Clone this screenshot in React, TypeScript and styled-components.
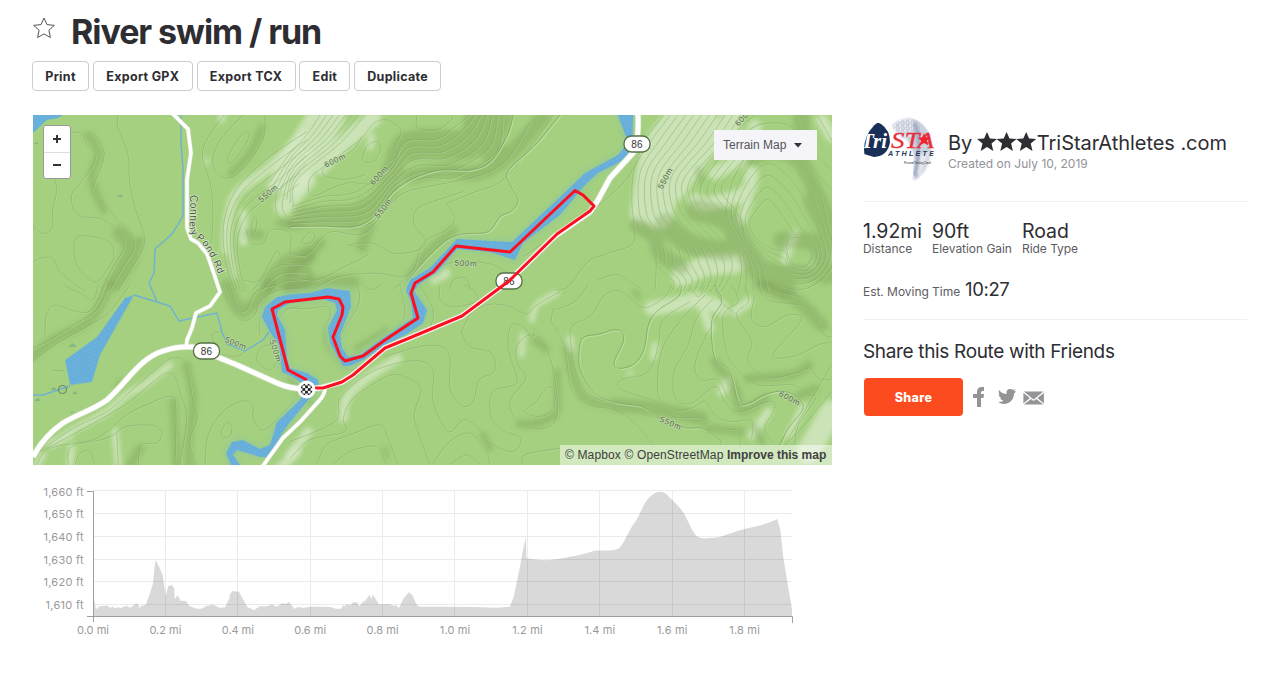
import React from 'react';
import styled, { createGlobalStyle } from 'styled-components';

const Global = createGlobalStyle`
  * { box-sizing: border-box; }
  body { margin: 0; background: #fff; color: #2d2d32; font-family: Inter, "Liberation Sans", sans-serif; }
`;

const Page = styled.main`
  padding: 11px 21px 0 32px;
  height: 688px;
  overflow: hidden;
`;
const TitleRow = styled.header`
  display: flex;
  align-items: center;
  height: 40px;
  gap: 15px;
  svg { margin-top: -7px; }
`;
const Title = styled.h1`
  margin: 0;
  padding-top: 1px;
  font-size: 34px;
  line-height: 40px;
  font-weight: 700;
  letter-spacing: -1.06px;
  white-space: nowrap;
`;
const Actions = styled.nav`
  display: flex;
  gap: 3.8px;
  margin-top: 10px;
`;
const ActionButton = styled.button<{ $w: number }>`
  width: ${(p) => p.$w}px;
  height: 30px;
  padding: 0;
  border: 1px solid #ccccd0;
  border-radius: 4px;
  background: #fff;
  color: #2d2d32;
  font: 700 12.5px/29px Inter, sans-serif;
  letter-spacing: 0.3px;
  white-space: nowrap;
`;
const Columns = styled.div`
  display: flex;
  gap: 31px;
  padding-left: 1px;
  margin-top: 24px;
`;
const Left = styled.section`
  width: 799px;
  flex: none;
`;
const MapFrame = styled.div`
  position: relative;
  height: 350px;
  overflow: hidden;
  > svg { display: block; }
`;
const ZoomControl = styled.div`
  position: absolute;
  left: 10px;
  top: 10px;
  width: 28px;
  height: 54px;
  border: 1px solid #999;
  border-radius: 3px;
  background: #fff;
`;
const ZoomKey = styled.button`
  display: grid;
  place-items: center;
  width: 26px;
  height: 26px;
  padding: 0;
  border: 0;
  background: none;
  & + & { border-top: 1px solid #ddd; height: 25px; padding-bottom: 1px; }
`;
const MapType = styled.button`
  position: absolute;
  left: 681px;
  top: 15px;
  width: 103px;
  height: 30px;
  display: flex;
  align-items: center;
  gap: 8px;
  padding: 0 9px;
  border: 0;
  background: #f4f4f9;
  color: #55555a;
  font: 12px "Liberation Sans", sans-serif;
  white-space: nowrap;
`;
const Attribution = styled.div`
  position: absolute;
  right: 0;
  bottom: 0;
  width: 272px;
  height: 20px;
  padding-left: 5px;
  background: rgba(255, 255, 255, 0.5);
  color: #404040;
  font: 12px/20px "Liberation Sans", sans-serif;
  letter-spacing: 0.14px;
  white-space: nowrap;
  b { letter-spacing: 0; }
`;
const ChartWrap = styled.div`
  margin-top: 15px;
  svg { display: block; }
`;
const Side = styled.aside`
  width: 384px;
  flex: none;
`;
const Author = styled.div`
  display: flex;
  height: 87px;
  gap: 14px;
  padding-left: 1px;
  border-bottom: 1px solid #f0f0f5;
`;
const AuthorText = styled.div`
  padding-top: 15px;
`;
const Name = styled.div`
  font-size: 20px;
  line-height: 26px;
  letter-spacing: -0.05px;
  white-space: nowrap;
  svg { vertical-align: -2px; margin-left: -1px; }
`;
const Created = styled.div`
  font-size: 12px;
  line-height: 15px;
  color: #929297;
  letter-spacing: 0.02px;
`;
const Stats = styled.div`
  display: flex;
  padding-top: 17px;
  height: 75px;
`;
const Stat = styled.div<{ $w: number }>`
  width: ${(p) => p.$w}px;
  white-space: nowrap;
`;
const Value = styled.div`
  font-size: 19.5px;
  line-height: 24px;
  letter-spacing: -0.03px;
`;
const Label = styled.div`
  font-size: 12px;
  line-height: 12px;
  color: #5c5c61;
  letter-spacing: -0.04px;
`;
const Moving = styled.div`
  display: flex;
  align-items: baseline;
  gap: 5px;
  height: 43px;
  border-bottom: 1px solid #f0f0f0;
`;
const Time = styled.span`
  font-size: 18.5px;
  line-height: 24px;
  letter-spacing: -0.4px;
`;
const ShareTitle = styled.h2`
  margin: 19px 0 14px;
  font-size: 19px;
  line-height: 25px;
  font-weight: 400;
  letter-spacing: -0.34px;
`;
const ShareRow = styled.div`
  display: flex;
  align-items: center;
  padding-left: 1px;
`;
const ShareButton = styled.button`
  width: 99px;
  height: 38px;
  border: 0;
  border-radius: 4px;
  background: #fc4c1f;
  color: #fff;
  font: 800 12.5px Inter, sans-serif;
  letter-spacing: 0.3px;
  margin-right: 10px;
`;

type Pt = [number, number];

/* Catmull-Rom spline through a list of points. */
function curve(p: Pt[], closed = false): string {
  const n = p.length;
  const at = (i: number): Pt => (closed ? p[(i + n) % n] : p[Math.max(0, Math.min(n - 1, i))]);
  let d = `M${p[0][0]} ${p[0][1]}`;
  for (let i = 0; i < (closed ? n : n - 1); i++) {
    const [a, b, c, e] = [at(i - 1), at(i), at(i + 1), at(i + 2)];
    d += `C${(b[0] + (c[0] - a[0]) / 6).toFixed(1)} ${(b[1] + (c[1] - a[1]) / 6).toFixed(1)} ${(c[0] - (e[0] - b[0]) / 6).toFixed(1)} ${(c[1] - (e[1] - b[1]) / 6).toFixed(1)} ${c[0].toFixed(1)} ${c[1].toFixed(1)}`;
  }
  return closed ? d + 'Z' : d;
}
function pts(s: string): Pt[] {
  return s.trim().split(/\s+/).map((q) => q.split(',').map(Number) as Pt);
}
/* Evenly spaced contours between two boundary contours. */
function band(a: string, b: string, n: number, closed = false): string[] {
  const A = pts(a);
  const B = pts(b);
  return Array.from({ length: n + 1 }, (_, k) =>
    curve(A.map((q, i) => [q[0] + ((B[i][0] - q[0]) * k) / n, q[1] + ((B[i][1] - q[1]) * k) / n] as Pt), closed));
}
const line = (s: string) => curve(pts(s));
const ring = (s: string) => curve(pts(s), true);

interface Sheet {
  x: number;
  y: number;
  lines: string[];
  bold?: string[];
  dark: [string, number][];
  light: [string, number][];
}

/* Terrain sheets, each drawn at three units to the pixel. */
const sheets: Sheet[] = [
  {
    x: 30, y: 110,
    lines: [
      line('265,15 262,45 275,80 296,140 299,210 315,290 342,370 340,415 305,475 265,540'),
      line('125,68 155,70 172,105 195,130 190,165 150,220 124,260 145,315 215,328 265,362 284,410 250,470 215,540'),
      line('195,72 222,120 215,170 190,230 192,258 235,292 260,330 303,368 312,415 280,470 240,540'),
      line('75,205 80,245 68,300 68,350 50,370 25,365 9,345'),
      ring('140,383 185,380 238,397 252,440 225,490 195,517 150,480 133,430'),
      line('9,455 40,443 70,447 90,485 125,515 165,545'),
      line('582,15 530,90 518,145 540,215 549,300 545,400'),
      line('640,15 575,85 549,145 560,190 600,204 650,165 700,85 705,15'),
      ring('595,140 620,95 648,66 656,85 630,130 600,162'),
      ...band('830,65 720,140 625,230 583,330 585,440 615,545', '830,160 740,245 655,310 623,390 632,490 650,545', 4),
      line('810,190 750,235 737,275 745,320 775,345 810,345'),
      line('810,220 765,255 758,300 785,330 810,325'),
      ring('665,345 672,322 680,330 679,355 670,368'),
      line('650,360 665,400 700,400 725,360 780,370 785,430 830,440'),
      line('640,510 690,510 740,425 760,455 810,460'),
      ...band('670,540 740,470 830,465', '720,545 760,515 830,510', 2),
    ],
    dark: [['175,75 205,130 185,205 220,300', 24], ['270,370 300,420 250,520', 44], ['330,390 310,455 260,530', 24], ['695,55 660,130 605,190', 24], ['655,370 690,375', 28], ['750,340 810,345', 24], ['720,520 770,465 830,440', 56], ['780,520 820,500', 66]],
    light: [['820,80 710,180 620,250 592,340 590,420', 28], ['640,310 640,395', 24], ['730,230 830,130', 40], ['760,290 830,210', 54], ['580,0 575,30', 20], ['530,150 530,158', 14], ['600,420 615,500', 14]],
  },
  {
    x: 290, y: 110,
    lines: [
      ...band('-60,215 0,130 50,75 90,15', '10,290 20,210 150,100 225,15', 7),
      line('55,245 60,205 100,170 170,120 215,85 250,40 290,30 330,55 330,80 315,110 322,135 290,160 270,180'),
      line('55,245 75,258 125,235 180,218 240,222 275,195 315,165 325,130 350,95 375,88'),
      line('215,80 190,120 130,155 98,180 110,200 170,208 225,195'),
      ...band('5,290 100,260 200,245 300,170 345,95 440,88 490,55 540,15', '0,350 100,350 240,340 310,245 400,205 500,200 620,125 640,15', 6),
      line('380,15 385,55 440,60 480,35 490,15'),
      ring('218,150 232,108 262,94 272,120 250,155'),
      ring('35,395 60,367 76,375 60,400'),
      line('0,430 50,435 95,385 130,365 220,372 280,310 340,250 440,225 560,200 650,150 720,40'),
      line('470,280 550,248 640,210 730,100 790,15'),
      line('470,280 495,325 470,360 400,400 370,480 310,540'),
      line('175,405 250,400 310,430 385,420 406,390 372,340 385,295 460,265 520,245'),
      line('0,500 80,510 155,475 235,430 175,405'),
      line('60,545 150,500 260,490 340,500 385,465'),
      line('480,540 490,510 530,505 540,540'),
      line('380,540 430,480 510,455 600,462 655,490'),
      line('810,370 760,400 700,440'),
    ],
    bold: [line('810,15 740,100 655,182 662,225 684,270 665,303 630,320 595,365 520,372 470,390 410,445 345,520'), line('0,350 90,348 190,350 250,320 310,245 370,205 450,180 540,180 600,155 650,80 670,15')],
    dark: [['350,110 420,100 540,100 570,15', 90], ['320,130 290,240 200,310 40,320', 60], ['360,200 470,180 550,190 640,150 760,20', 44], ['550,190 620,165 640,120', 28], ['0,340 100,330 200,345', 28], ['490,360 410,430 360,500', 26], ['240,345 215,410', 34], ['90,400 0,490', 34], ['0,530 120,515 190,515', 40], ['640,15 600,130', 56]],
    light: [['0,200 60,100 110,20', 110], ['-20,220 0,160 60,60', 60], ['90,170 160,100 250,25', 50], ['430,505 465,490', 32], ['0,200 90,110', 60], ['245,80 240,110', 20]],
  },
  {
    x: 555, y: 110,
    lines: [
      ...band('350,10 290,90 238,180 232,300 250,350 300,410 310,470 355,515 350,545', '560,10 500,100 405,210 410,280 450,340 500,390 530,450 525,500 500,545', 9),
      ...band('610,10 560,50 450,170 415,260 480,345 540,400 560,470 550,545', '640,130 580,140 530,190 500,245 555,320 575,400 620,470 640,545', 4),
      ...band('640,268 685,320 725,380 770,420 770,450 740,475 700,455 690,425 645,415 600,380 585,335 610,295', '640,90 730,140 790,240 820,350 840,440 800,510 730,540 665,520 610,455 550,385 515,290 560,160', 5, true),
      ring('697,395 730,383 760,400 770,440 745,470 705,450'),
      line('330,10 270,90 238,170 195,230 100,310 0,370'),
      line('235,330 235,400 160,430 100,455 40,530 0,540'),
      line('270,380 302,440 300,540'),
      line('130,510 190,495 260,540'),
      line('790,20 830,90'),
      line('725,15 760,110 830,180'),
      line('570,100 600,50 680,40 725,70 780,180 830,240'),
    ],
    dark: [['245,345 300,380 315,430 380,470', 44], ['330,340 400,400 480,420 520,420', 60], ['425,300 520,330 560,410 620,490 690,530', 66], ['590,145 650,125 730,150 790,260 820,330', 46], ['740,15 740,150', 50], ['680,390 780,400 810,480', 50], ['770,270 830,400', 50], ['430,180 435,210', 20], ['640,480 820,500', 45]],
    light: [['360,20 290,120 255,310', 60], ['440,20 350,150 310,310', 90], ['530,30 430,140 360,240', 66], ['600,50 560,140 480,190', 40], ['590,190 570,250 460,280 420,270', 42], ['580,270 560,330', 28], ['380,500 450,470 540,460', 60], ['720,370 690,450', 24], ['800,30 830,80', 35]],
  },
  {
    x: 30, y: 285,
    lines: [
      line('9,190 60,165 140,115 200,75 240,0'),
      line('9,230 75,180 180,120 240,80 300,0'),
      line('45,150 50,90 75,62 150,82 190,70 225,0'),
      line('100,0 160,30 190,45 205,0'),
      line('55,480 130,430 230,380 290,330 370,260 420,222 460,225 475,265 490,350 502,400 480,470 500,540'),
      line('9,510 60,485 200,410 300,350 390,275 430,268 450,320 470,400 450,540'),
      line('20,540 60,490 200,460 290,390 360,355 420,335 438,370 435,540'),
      line('115,540 125,485 230,460 290,425 370,422 396,445 380,475 335,480 325,540'),
      line('135,540 150,505 180,500 195,540'),
      line('260,440 265,540'),
      line('525,540 535,450 580,380 640,348 670,365 670,400 700,436 755,390 800,340'),
      ring('575,440 590,414 606,425 600,455 580,457'),
      ring('680,215 700,185 735,185 740,230 720,255 690,240'),
      line('560,190 547,150 570,142 610,170 650,190 620,215 560,205'),
      line('580,0 605,70 640,108 675,90 690,50 740,18 810,10'),
      line('600,0 625,70 650,75 680,20 740,0'),
      line('740,110 770,75 810,65'),
      line('690,150 690,110 705,75'),
    ],
    dark: [['240,0 180,105 70,165 0,220', 28], ['470,240 490,350 475,480 480,540', 25], ['430,350 440,540', 25], ['590,0 630,75 680,50 720,0', 38], ['330,490 300,540', 28], ['270,290 265,310', 18], ['640,90 690,40', 22]],
    light: [['60,480 130,435 230,380 290,330 350,295 420,240', 20], ['255,440 265,540', 20], ['125,485 120,540', 20], ['20,540 40,510', 18], ['800,500 740,560', 28], ['120,450 80,470', 22]],
  },
  {
    x: 290, y: 285,
    lines: [
      line('450,0 450,40 480,65 530,60 565,45 550,15 520,0'),
      line('515,140 545,85 600,58 660,65 710,87 740,60 810,20'),
      line('515,140 540,185 605,205 613,260 568,285 550,350 515,362 480,310 480,220 455,185 390,185 285,215'),
      line('735,130 725,160 705,130 665,120 655,190 680,270 675,300 610,320 602,390 635,435 692,460 670,500 600,475 560,425 520,405 475,440 430,350 430,260 390,228 300,240 220,275 150,340 135,410 0,470'),
      ring('720,150 680,185 685,240 708,280 660,350 685,410 750,432 800,400 795,280 765,180'),
      ring('705,380 740,350 770,310 793,315 790,370 750,395'),
      line('420,540 395,470 373,390 393,310 340,275 290,275 190,340 160,400 165,440 60,465 0,520'),
      line('430,535 480,470 540,445 590,500 600,540'),
      line('480,540 530,510 570,540'),
      line('80,540 110,480 180,450 270,420 295,460 325,540'),
      line('130,540 180,500 260,485 290,540'),
      line('-10,70 60,70 110,65 122,90 105,150 150,230 185,255 250,215'),
      line('205,0 205,60 150,160 170,203 200,207 300,140 345,90 330,0'),
      line('220,0 245,15 275,0'),
      line('390,0 430,75 420,130'),
      line('790,70 785,110 810,140'),
      line('700,540 705,510 810,490'),
    ],
    dark: [['145,155 115,130 110,180 165,245', 12], ['750,170 770,195', 20], ['802,260 803,370', 22], ['795,390 740,415 690,415', 26], ['580,450 600,490', 20], ['285,490 290,515', 14], ['200,190 290,135', 18], ['735,165 760,185', 25], ['0,280 60,350', 18]],
    light: [['325,220 230,280 170,340 160,400', 26], ['725,105 740,60 800,25', 18], ['698,150 695,210', 17], ['55,440 0,510', 26]],
  },
  {
    x: 555, y: 285,
    lines: [
      line('45,150 55,120 110,90 150,30 200,20 265,68 330,35 350,0'),
      line('0,75 60,50 100,0'),
      line('0,130 30,190 50,310 100,360 180,375 240,415 295,480'),
      line('45,150 60,250 95,325 150,350'),
      line('405,50 325,105 310,180 280,260 200,285 195,310 240,330 300,350 350,395 440,400 500,430 550,440 555,490'),
      line('450,30 375,110 320,200 310,330 360,375 410,370 450,350 485,395 530,410 590,408 590,460'),
      line('475,40 425,100 400,180 358,260 362,340 410,355 480,305 510,350 550,382 640,350 660,370 630,430 660,480'),
      line('510,60 455,150 420,240 440,285 490,285 520,340 555,365'),
      line('530,0 550,50 505,90 515,200 545,250 610,300 710,300 760,330 782,340 730,420 720,480'),
      line('570,0 580,50 545,90 590,170 580,230 640,278 720,265 765,250 790,280 830,285'),
      line('600,30 590,100 630,125 700,90 740,105 660,200 670,220 730,210 790,180 830,172'),
      line('630,0 670,22 740,40 790,100 830,140'),
      line('610,0 640,45 740,62 780,90 810,150 830,155'),
      line('400,0 430,35 450,0'), line('480,0 500,50 540,85'),
      line('690,480 740,430 830,320'), line('830,240 700,460'),
    ],
    bold: [
      line('380,0 370,35 310,75 280,120 268,190 240,235 195,250 178,230 205,170 200,140 175,135 130,148 90,155 75,180 75,250 120,325 180,352 260,365 310,400 390,428 440,430 495,465 500,480'),
      line('480,0 500,50 470,110 480,220 525,260 550,350 580,355 640,325 700,322 745,365 700,430 675,480'),
    ],
    dark: [['35,190 60,290 110,350 270,370', 24], ['180,360 290,370 440,400', 42], ['480,230 540,310 560,375 630,340', 30], ['580,280 710,270 760,240', 28], ['620,0 730,50 800,120', 40], ['720,340 780,310', 26], ['460,430 560,440', 26], ['240,20 250,35', 16], ['600,430 620,470', 22]],
    light: [['290,70 380,55 430,45 500,70', 44], ['440,60 465,130', 28], ['300,180 295,215', 20], ['45,160 48,190', 20], ['580,50 540,80', 28], ['500,320 515,290', 28], ['640,380 590,450', 24], ['745,365 700,450', 20], ['830,380 760,500', 70], ['220,265 230,262', 12]],
  },
];

const river =
  'M618 115L626 137V145L618 155L585 173L560 197L512 242L457 239L430 268L410 280L406 290L411 302L413 318L380 340L360 355L348 357L342 348L340 335L351 307L350 291L327 288L310 293L293 294L277 297L265 307L262 317L270 332L279 345L282 372L293 377L303 384L305 391L300 400L277 422L270 445L260 449L243 440L232 442L226 453L231 465H240L233 455L237 450L260 457H268L283 432L290 422L319 387L318 380L307 373L290 368L287 358L285 330L277 315L278 310L290 303L323 299L335 303L337 310L328 328L330 343L343 366H350L363 360L387 344L407 334L423 323L427 310L418 297L414 291L418 285L437 272L457 249L490 252L515 260L523 243L560 215L585 185L598 173L618 163L632 153L633 115Z';
const route =
  'M307 380L288 370L272 309L285 302L328 297L339 299L343 307L342 315L333 337L340 356L345 361L363 356L385 340L418 318L411 293L415 283L433 272L456 246L510 252L575 190.5L583 195L594 206L590 211L557 234L509 281L462 316L407 339L385 348L353 375L342 382L323 388H312';
const highway =
  'M33 457Q43 437 63 423C80 413 93 410 107 400C127 382 140 358 163 351Q177 346 193 347L237 365L277 383Q290 389 307 389L320 388L342 382L353 375L385 348L407 339L462 316L509 281L555 236L590 212L598 200L610 178L633 153Q639 143 638 115';
const sideRoad = 'M172 113L188 129L191 153L187 180V228L191 239L198 243L207 254L212 268L220 292L210 306L196 313L192 328L187 340L186 348';
const southRoad = 'M325 388Q325 395 318 402L300 422L283 438L262 467';
const streams = 'M181 115V143L183 170V216L172 234L155 249L154 273L149 283L157 302M134 295L157 302L170 306L179 321L217 313L222 332L227 344L245 351L263 340L269 332M33 395H43L70 386';

function HighwayShield({ x, y }: { x: number; y: number }) {
  return (
    <g>
      <rect x={x - 13} y={y - 8} width="26" height="16" rx="7.5" fill="#fff" stroke="#58704a" strokeWidth="1.3" />
      <text x={x} y={y + 3.6} textAnchor="middle" fontSize="10" fill="#333" letterSpacing=".2">86</text>
    </g>
  );
}

function ElevationLabel({ x, y, r, children }: { x: number; y: number; r: number; children: string }) {
  return (
    <text transform={`translate(${x} ${y}) rotate(${r})`} textAnchor="middle" dy="3" fontSize="8" letterSpacing=".7" fill="#56684a" stroke="#c4deb0" strokeWidth="1.6" strokeOpacity=".7" paintOrder="stroke">
      {children}
    </text>
  );
}

function TerrainMap() {
  return (
    <svg width="799" height="350" viewBox="33 115 799 350" fontFamily="Liberation Sans, sans-serif">
      <defs>
        <filter id="soft" x="-20%" y="-20%" width="140%" height="140%"><feGaussianBlur stdDeviation="8" /></filter>
        <filter id="glow"><feGaussianBlur stdDeviation="2.5" /></filter>
        <pattern id="ripple" width="9" height="8" patternUnits="userSpaceOnUse">
          <rect width="9" height="8" fill="#67afda" />
          <path d="M1 1h1M5 2h1M3 4h1M7 5h1M1 6h1M5 7h1" stroke="#7fbde2" strokeWidth=".6" />
        </pattern>
      </defs>
      <rect x="33" y="115" width="799" height="350" fill="#a4d07f" />
      {sheets.map((s, i) => (
        <g key={i} transform={`translate(${s.x} ${s.y}) scale(.33333)`} fill="none" strokeLinecap="round" strokeLinejoin="round">
          <g filter="url(#soft)">
            <g stroke="#d6e9c6" opacity=".78">{s.light.map(([d, w], k) => <path key={k} d={line(d)} strokeWidth={w} />)}</g>
            <g stroke="#779951" opacity=".34">{s.dark.map(([d, w], k) => <path key={k} d={line(d)} strokeWidth={w} />)}</g>
          </g>
        </g>
      ))}
      {sheets.map((s, i) => (
        <g key={i} transform={`translate(${s.x} ${s.y}) scale(.33333)`} fill="none" strokeLinejoin="round">
          <g stroke="#c5e4ab" strokeWidth="2.2" opacity=".55" transform="translate(2 2)">{s.lines.map((d, k) => <path key={k} d={d} />)}</g>
          <g stroke="#76985b" strokeWidth="2.3" opacity=".48">{s.lines.map((d, k) => <path key={k} d={d} />)}</g>
          <g stroke="#c5e4ab" strokeWidth="4" opacity=".65" transform="translate(3 3)">{s.bold?.map((d, k) => <path key={k} d={d} />)}</g>
          <g stroke="#76985b" strokeWidth="3" opacity=".6">{s.bold?.map((d, k) => <path key={k} d={d} />)}</g>
        </g>
      ))}
      <path d={river} fill="none" stroke="#98ca91" strokeWidth="5" filter="url(#glow)" />
      <path d={river} fill="url(#ripple)" />
      <path d="M33 115H63L58 118L47 120L33 133Z" fill="url(#ripple)" />
      <path d="M134 295L125 298L97 337L65 360L70 385L92 382L100 355Z" fill="url(#ripple)" stroke="#89c2a4" strokeWidth=".6" />
      <path d={streams} fill="none" stroke="#70b1d2" strokeWidth="1.4" />
      <path d="M68 347l5-4 4 4zM50 390l4-3 3 3zM34 401l4-3 3 3zM72 394l3-3 3 3zM116 197l5-3 2 3zM33 144l5-2v2zM70 413l2-2 2 1zM53 370h10v.7H53z" fill="#83b780" />
      <circle cx="62.5" cy="389.5" r="4" fill="none" stroke="#6f8a68" strokeWidth="1.2" />
      {[sideRoad, southRoad].map((d) => <path key={d} d={d} fill="none" stroke="#c9ddb8" strokeWidth="4.6" />)}
      <path d={highway} fill="none" stroke="#c9ddb8" strokeWidth="6.4" />
      <path d={sideRoad} fill="none" stroke="#fff" strokeWidth="3.4" strokeLinejoin="round" />
      <path d={southRoad} fill="none" stroke="#fff" strokeWidth="3.4" />
      <path d={highway} fill="none" stroke="#fff" strokeWidth="4.9" strokeLinejoin="round" />
      <HighwayShield x={206.5} y={351} />
      <HighwayShield x={509} y={281} />
      <HighwayShield x={637} y={144} />
      <path id="pondRoad" d="M189.500 195V222Q189 235 198 240Q210 248 225 292" fill="none" />
      <text fontSize="10" letterSpacing=".62" fill="#4b5545" stroke="#d6e8c8" strokeWidth="1.5" paintOrder="stroke">
        <textPath href="#pondRoad">Connery Pond Rd</textPath>
      </text>
      <ElevationLabel x={268} y={193} r={-40}>550m</ElevationLabel>
      <ElevationLabel x={335} y={160} r={-26}>600m</ElevationLabel>
      <ElevationLabel x={379} y={175} r={-48}>600m</ElevationLabel>
      <ElevationLabel x={383} y={208} r={-52}>550m</ElevationLabel>
      <ElevationLabel x={466} y={263} r={2}>500m</ElevationLabel>
      <ElevationLabel x={665} y={178} r={-62}>550m</ElevationLabel>
      <ElevationLabel x={744} y={116} r={-48}>600m</ElevationLabel>
      <ElevationLabel x={236} y={343} r={22}>500m</ElevationLabel>
      <ElevationLabel x={276} y={351} r={72}>500m</ElevationLabel>
      <ElevationLabel x={671} y={423} r={23}>550m</ElevationLabel>
      <ElevationLabel x={790} y={398} r={28}>600m</ElevationLabel>
      <path d={route} fill="none" stroke="#fc101f" strokeWidth="3" strokeLinejoin="round" />
      <circle cx="306.5" cy="389.5" r="9" fill="#fff" />
      <g transform="translate(306.5 389.5)">
        <clipPath id="flag"><circle r="6" /></clipPath>
        <g clipPath="url(#flag)" fill="#222">
          {[-2, -1, 0, 1, 2].flatMap((r) => [-2, -1, 0, 1, 2].filter((c) => (r + c) % 2 !== 0).map((c) => <rect key={`${r}${c}`} x={c * 2.7 - 1.4} y={r * 2.7 - 1.4} width="2.8" height="2.8" />))}
        </g>
      </g>
    </svg>
  );
}

const profile =
  'M190 345L198 388 205 381 216 377 222 379 232 376 240 383 248 380 255 385 265 382 272 384 290 377 300 383 312 376 318 370 326 375 327 384 335 377 347 374 360 340 369 310 373 268 377 240 388 262 398 285 403 320 408 345 415 318 425 315 433 325 434 357 443 346 452 362 468 363 478 378 500 386 515 386 528 378 550 374 568 383 585 382 598 355 600 343 608 333 627 335 640 360 652 381 672 390 690 379 712 379 725 373 740 380 758 369 768 372 777 365 793 386 805 380 820 384 840 380 885 380 905 382 918 386 934 386 940 374 943 379 951 373 961 375 970 367 981 367 988 379 998 366 1007 361 1018 344 1025 357 1028 343 1047 373 1079 372 1089 377 1098 376 1107 384 1120 356 1137 336 1147 346 1160 374 1169 380 1260 380 1330 381 1400 383 1440 380 1451 350 1465 285 1479 210 1488 170 1489 234C1530 243 1560 242 1600 234C1635 227 1660 224 1690 213C1720 207 1755 220 1773 199C1795 163 1800 145 1818 122C1835 95 1840 67 1860 50C1880 31 1895 32 1910 43C1935 70 1943 72 1962 100C1987 149 1990 165 2010 173C2030 176 2050 174 2065 172C2110 157 2130 149 2160 143C2193 135 2210 132 2242 117L2251 150 2260 232 2271 300 2286 388V409H190Z';

function ElevationChart() {
  const ys = [490.5, 513.5, 536.5, 559.5, 581.5, 604.5];
  return (
    <svg width="799" height="165" viewBox="33 480 799 165" fontFamily="Inter, sans-serif" fontSize="11" fill="#99999c">
      <g stroke="#ebebeb" fill="none">
        {ys.map((y) => <path key={y} d={`M93 ${y}H792`} />)}
        {[165, 237, 310, 382, 454, 527, 599, 672, 744].map((x) => <path key={x} d={`M${x + 0.5} 490V616`} />)}
      </g>
      <path d={profile} transform="translate(30 480) scale(.33333)" fill="#000" fillOpacity=".15" />
      <path d="M87 491.5H93.5V622M87 616.5H792.5V623" fill="none" stroke="#9e9e9e" />
      {ys.map((y, i) => (
        <text key={y} x="83.5" y={[496, 518, 541, 564, 586, 609][i]} textAnchor="end" textLength={i === 5 ? 38 : 40}>{`1,${660 - i * 10} ft`}</text>
      ))}
      {Array.from({ length: 10 }, (_, i) => (
        <text key={i} x={93 + i * 72.4} y="634" textAnchor="middle" textLength={i > 4 ? 30.5 : 32}>{`${(i * 0.2).toFixed(1)} mi`}</text>
      ))}
    </svg>
  );
}

const starPath = 'M10 0L12.900 6.500L20 7L14.500 11.600L16.300 19L10 15L3.700 19L5.500 11.600L0 7L7.100 6.500Z';

function Avatar() {
  return (
    <svg width="70" height="70" viewBox="0 0 70 70">
      <defs>
        <clipPath id="avatarClip"><circle cx="35" cy="35" r="35" /></clipPath>
        <filter id="figureBlur"><feGaussianBlur stdDeviation="1" /></filter>
        <pattern id="speckle" width="5" height="5" patternUnits="userSpaceOnUse"><path d="M0 1h2M3 3h1M1 4h1" stroke="#fff" /></pattern>
      </defs>
      <g clipPath="url(#avatarClip)">
        <path d="M28 10Q38 1 53 4Q69 13 67 35Q65 54 55 62Q52 67 49 64Q53 53 49 37L43 24Q33 23 28 10Z" fill="#cbd0dd" filter="url(#figureBlur)" />
        <path d="M50 8Q56 18 55 39L51 61" fill="none" stroke="#a3adc4" strokeWidth="4.500" filter="url(#figureBlur)" />
        <path d="M57 40L66 36L56 61L53 58Z" fill="#fff" opacity=".5" filter="url(#figureBlur)" />
        <path d="M25 3H50V22H27Z" fill="url(#speckle)" />
        <path d="M0 14Q10 5 17 9Q26 15 26 27Q24 41 10 42L0 39Z" fill="#192f58" />
        <text x="-3" y="33" fontFamily="Liberation Serif" fontSize="21" fontWeight="700" fontStyle="italic" fill="#fff" textLength="26" lengthAdjust="spacingAndGlyphs">Tri</text>
        <text x="27" y="33" fontFamily="Liberation Serif" fontSize="23.5" fontStyle="italic" fill="#e8303a" stroke="#e8303a" strokeWidth=".3" textLength="43" lengthAdjust="spacingAndGlyphs">STA</text>
        <path d="M60 18l1.700 4.200 4.800.2-3.700 3.200 1.500 4.800-4.300-2.700-4.200 3 1.400-5-3.600-3 4.800-.5z" fill="#f0232f" />
        <text x="24" y="41" fontFamily="Liberation Sans" fontSize="7.200" fontStyle="italic" fontWeight="700" fill="#263858" textLength="46">ATHLETE</text>
        <text x="40" y="49" fontFamily="Liberation Sans" fontSize="3.2" fontStyle="italic" fontWeight="700" fill="#555" textLength="27" lengthAdjust="spacingAndGlyphs">Personal Training Coach</text>
      </g>
    </svg>
  );
}

const actions: [string, number][] = [['Print', 57], ['Export GPX', 100], ['Export TCX', 99], ['Edit', 51], ['Duplicate', 87]];

export default function App() {
  return (
    <Page>
      <Global />
      <TitleRow>
        <svg width="24" height="24" viewBox="0 0 24 24" fill="none" stroke="#55555a" strokeWidth="1" strokeLinejoin="round">
          <path d="M12 2L15 8.600L22.300 9.400L16.900 14.300L18.400 21.500L12 17.900L5.600 21.500L7.100 14.300L1.700 9.400L9 8.600Z" />
        </svg>
        <Title>River swim / run</Title>
      </TitleRow>
      <Actions>{actions.map(([name, w]) => <ActionButton key={name} $w={w}>{name}</ActionButton>)}</Actions>
      <Columns>
        <Left>
          <MapFrame>
            <TerrainMap />
            <ZoomControl>
              <ZoomKey aria-label="Zoom in"><svg width="8" height="8" stroke="#333" strokeWidth="2"><path d="M0 4H8M4 0V8" /></svg></ZoomKey>
              <ZoomKey aria-label="Zoom out"><svg width="8" height="8" stroke="#333" strokeWidth="2"><path d="M0 4H8" /></svg></ZoomKey>
            </ZoomControl>
            <MapType>Terrain Map<svg width="8" height="5" fill="#333"><path d="M0 0H8L4 4.5Z" /></svg></MapType>
            <Attribution>© Mapbox © OpenStreetMap <b>Improve this map</b></Attribution>
          </MapFrame>
          <ChartWrap><ElevationChart /></ChartWrap>
        </Left>
        <Side>
          <Author>
            <Avatar />
            <AuthorText>
              <Name>
                By <svg width="60" height="20" viewBox="0 0 60 20" fill="#2d2d32">{[0, 19.6, 39.2].map((x) => <path key={x} d={starPath} transform={`translate(${x})`} />)}</svg>TriStarAthletes .com
              </Name>
              <Created>Created on July 10, 2019</Created>
            </AuthorText>
          </Author>
          <Stats>
            <Stat $w={69}><Value>1.92mi</Value><Label>Distance</Label></Stat>
            <Stat $w={90}><Value>90ft</Value><Label>Elevation Gain</Label></Stat>
            <Stat $w={80}><Value>Road</Value><Label>Ride Type</Label></Stat>
          </Stats>
          <Moving><Label as="span">Est. Moving Time</Label><Time>10:27</Time></Moving>
          <ShareTitle>Share this Route with Friends</ShareTitle>
          <ShareRow>
            <ShareButton>Share</ShareButton>
            <svg width="72" height="24" viewBox="0 0 72 24" fill="#949497">
              <path d="M4 22V13H0V9H4V7Q4 2 9 2H11V6H9.500Q8 6 8 7.500V9H11L10.500 13H8V22Z" />
              <path d="M26 4.500Q29 8.500 33.500 8.500Q33 3.500 37 3.500Q39 3.500 40 4.500L42.500 3.500L41 6L43 5.500Q42 7.500 41 8Q41 13.500 37 16.500Q31 20.500 25 16.500Q29 16.500 30.500 15Q28 14.500 27 12.500H28.500Q26 11.500 25.500 8.500L27 9Q25 7.500 26 4.500Z" transform="translate(0 .5)" />
              <path d="M51.500 6H71L61.200 14Z M51 7.500L57.500 12.500L51 18Z M71.500 7.500L65 12.500L71.500 18Z M51.500 19L58.700 13.500L61.200 15.500L63.800 13.500L71 19Z" transform="translate(-.6 .4)" />
            </svg>
          </ShareRow>
        </Side>
      </Columns>
    </Page>
  );
}
